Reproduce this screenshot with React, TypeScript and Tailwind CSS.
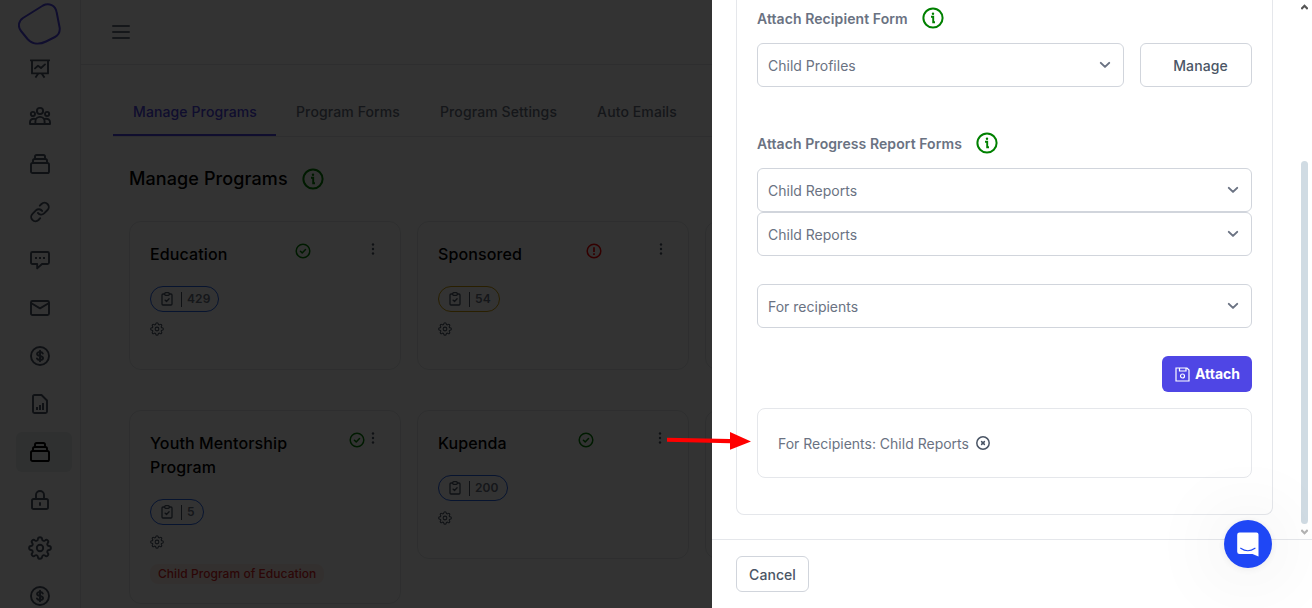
import React from "react";

type P = { className?: string };

const Line = ({ className = "", w = 1.9, box = "0 0 20 20", children }: P & { w?: number; box?: string; children: React.ReactNode }) => (
  <svg viewBox={box} fill="none" stroke="currentColor" strokeWidth={w} strokeLinecap="round" strokeLinejoin="round" className={`block shrink-0 overflow-visible ${className}`}>
    {children}
  </svg>
);

const Board = () => (
  <Line className="relative top-0.5 size-5">
    <path strokeLinecap="square" d="M1 .4H19M2 .4V13.4H18V.4M8 14L6 16.8M12 14L14 16.8" />
    <path d="M5 8.4L8 5.700L11 8L15 4.400" />
  </Line>
);

const People = () => (
  <Line className="h-5 w-[22px]" box="0 0 22 20">
    <circle cx="11" cy="5" r="3.1" />
    <circle cx="3.9" cy="8" r="2.1" />
    <circle cx="18.1" cy="8" r="2.1" />
    <path d="M6.400 18V15.500a4.600 4.600 0 0 1 9.200 0V18M6 12.900C3.200 12.400 1 13.600 1 16V18H21V16C21 13.600 18.800 12.400 16 12.900" />
  </Line>
);

const Stack = () => (
  <Line className="size-5">
    <rect x="1" y="9" width="18" height="10" rx="1.6" />
    <path d="M3 8.6V6.6Q3 5 4.6 5H15.4Q17 5 17 6.6V8.6M5 4.6V2.6Q5 1 6.6 1H13.4Q15 1 15 2.6V4.6" />
  </Line>
);

const LinkIcon = () => (
  <Line className="size-5">
    <path d="M7.9 10.9a4.1 4.1 0 0 0 6.2.5l3.4-3.4A4.2 4.2 0 0 0 11.5 2L9.8 3.7M12.1 8.9a4.1 4.1 0 0 0-6.2-.5L2.5 11.8A4.2 4.2 0 0 0 8.5 18l1.7-1.8" />
  </Line>
);

const Chat = () => (
  <Line className="size-5">
    <path d="M2.5 2H17.5Q19 2 19 3.5V12.5Q19 14 17.5 14H12L7.2 18.4V14H2.5Q1 14 1 12.5V3.5Q1 2 2.5 2Z" />
    <path strokeLinecap="butt" strokeWidth={2} d="M5 8H7M9 8H11M13 8H15" />
  </Line>
);

const Mail = () => (
  <Line className="size-5">
    <rect x="1" y="3" width="18" height="14" rx="1.5" />
    <path d="M1.4 5.3L10 10.4L18.6 5.3" />
  </Line>
);

const Dollar = () => (
  <Line className="size-5">
    <circle cx="10" cy="10" r="9" />
    <path strokeWidth={2} d="M12.8 7.5C12.4 6.5 11.4 6 10 6C8.2 6 7.1 6.7 7.1 7.9C7.1 10.8 13 9.1 13 12C13 13.3 11.8 14 10 14C8.4 14 7.4 13.4 7 12.5M10 4.8V15.2" />
  </Line>
);

const Report = () => (
  <Line className="size-5">
    <path d="M4.5 1H11.5L17 6.5V17.5Q17 19 15.5 19H4.5Q3 19 3 17.5V2.5Q3 1 4.5 1Z" />
    <path strokeLinecap="butt" strokeWidth={2} d="M7 13V16M10 11V16M13 9V16" />
  </Line>
);

const Lock = () => (
  <Line className="size-5">
    <rect x="2" y="9" width="16" height="10" rx="1.6" />
    <path d="M6 8.5V5a4 4 0 0 1 8 0V8.5" />
    <path strokeLinecap="butt" strokeWidth={2} d="M10 12.3V15.7" />
  </Line>
);

const Gear = ({ className = "", w = 1.7 }: P & { w?: number }) => (
  <Line className={className} w={w} box="0 0 24 24">
    <circle cx="12" cy="12" r="3.2" />
    <path d="M12 1.2c1.2 0 2 .8 2.1 2 .1 1.5 1.700 2.200 2.900 1.200.9-.8 2-.7 2.700 0s.8 1.800 0 2.700c-1 1.200-.3 2.800 1.200 2.900 1.200.1 2 .9 2 2s-.8 1.900-2 2c-1.500.1-2.200 1.700-1.200 2.900.8.9.7 2 0 2.700s-1.800.8-2.700 0c-1.200-1-2.800-.3-2.900 1.200-.1 1.200-.9 2-2.100 2s-2-.8-2.100-2c-.1-1.500-1.700-2.200-2.900-1.200-.9.800-2 .7-2.700 0s-.8-1.800 0-2.700c1-1.200.3-2.800-1.200-2.900-1.200-.1-2-.9-2-2s.8-1.900 2-2c1.500-.1 2.200-1.700 1.200-2.900-.8-.9-.7-2 0-2.700s1.800-.8 2.700 0c1.200 1 2.800.3 2.900-1.200.1-1.200.9-2 2.100-2Z" />
  </Line>
);

const Info = () => (
  <svg viewBox="0 0 22 22" className="block size-[22px] shrink-0" fill="none" stroke="#008000">
    <circle cx="11" cy="11" r="9.6" strokeWidth="2" />
    <circle cx="11" cy="6.700" r="1.200" fill="#008000" stroke="none" />
    <path d="M9 9.800H11.200V15.200H13" strokeWidth="1.900" />
  </svg>
);

const Check = () => (
  <Line className="size-4 text-[#008000]" w={1.5} box="0 0 16 16">
    <circle cx="8" cy="8" r="6.8" />
    <path d="M5.400 8.200L7.200 9.900L10.500 6.500" />
  </Line>
);

const Alert = () => (
  <Line className="size-4 text-[#ff0000]" w={1.5} box="0 0 16 16">
    <circle cx="8" cy="8" r="6.8" />
    <path strokeLinecap="butt" strokeWidth={1.700} d="M8 4.300V8.900M8 10.200V11.900" />
  </Line>
);

const Dots = () => (
  <svg viewBox="0 0 4 14" className="block h-3.5 w-1 shrink-0 text-gray-600" fill="currentColor">
    <circle cx="2" cy="2.500" r="1.200" />
    <circle cx="2" cy="7" r="1.200" />
    <circle cx="2" cy="11.500" r="1.200" />
  </svg>
);

const Clipboard = () => (
  <Line className="h-[14px] w-3 text-gray-600" w={1.3} box="0 0 12 14">
    <path d="M3.500 2H2Q1 2 1 3V12Q1 13 2 13H10Q11 13 11 12V3Q11 2 10 2H8.500" />
    <rect x="3.700" y=".7" width="4.600" height="2.600" rx="1" />
    <path d="M4 8.100L5.500 9.500L8.100 6.700" />
  </Line>
);

const Chevron = () => (
  <Line className="h-1.5 w-2.5 text-gray-500" w={2} box="0 0 10 6">
    <path d="M.8 .9L5 4.900L9.200 .9" />
  </Line>
);

const navItems = [Board, People, Stack, LinkIcon, Chat, Mail, Dollar, Report, Stack, Lock, () => <Gear className="size-6" w={1.900} />, Dollar];

function Sidebar() {
  return (
    <aside className="flex w-[81px] shrink-0 flex-col border-r border-gray-200">
      <div className="flex h-12 shrink-0 justify-center pt-[3px]">
        <svg viewBox="0 0 44 42" className="block h-[42px] w-11" fill="none" stroke="#4f46e5" strokeWidth="2">
          <path d="M5 15L25 2.500C31 -.8 37.500 2.500 38.600 9L41.700 25C42 29 41 32 37 34L28 38.500C21 42 14 41 9.500 36L3 28C-.5 23.500 .5 18 5 15Z" />
        </svg>
      </div>
      <nav className="flex flex-col gap-2 px-4">
        {navItems.map((Icon, i) => (
          <div key={i} className={`flex h-10 w-14 shrink-0 items-center rounded-md ${i === 8 ? "bg-[#e9f0ef] text-black" : "text-gray-600"}`}>
            <div className="flex w-12 justify-center"><Icon /></div>
          </div>
        ))}
      </nav>
    </aside>
  );
}

type Program = { name: string; count: number; pill: string; inset: string; dots: string; alert?: boolean; parent?: string };

function ProgramCard({ p }: { p: Program }) {
  return (
    <article className="rounded-xl border border-gray-200 p-5 pb-[33px]">
      <div className="flex items-start">
        <h3 className="flex-1 text-base font-medium tracking-[0.12px] text-black">{p.name}</h3>
        <div className={p.inset}>{p.alert ? <Alert /> : <Check />}</div>
        <div className={p.dots}><Dots /></div>
      </div>
      <div className="mt-5 flex">
        <div className={`flex h-[26px] items-center rounded-full border pl-2.5 pr-2 text-xs font-semibold text-gray-500 ${p.pill}`}>
          <Clipboard />
          <span className="ml-2 h-[15px] w-px bg-gray-600" />
          <span className="ml-[5px] tracking-[0.1px]">{p.count}</span>
        </div>
      </div>
      <Gear className="mt-2.5 size-3.5 text-gray-600" w={1.800} />
      {p.parent && (
        <div className="mt-[15px] -mb-[14px] flex">
          <span className="h-5 rounded-lg bg-[#fdf0ec] px-2 text-xs leading-5 font-medium tracking-[0.05px] text-[#dc2626]">{p.parent}</span>
        </div>
      )}
    </article>
  );
}

const blue = "border-[#2563eb]";
const programs: Program[] = [
  { name: "Education", count: 429, pill: blue, inset: "mt-px mr-[60px]", dots: "mr-[5px]" },
  { name: "Sponsored", count: 54, pill: "border-[#ca9a04]", inset: "mt-px mr-[57px]", dots: "mr-[5px]", alert: true },
  { name: "", count: 0, pill: blue, inset: "mr-1.5", dots: "mr-1" },
  { name: "Youth Mentorship Program", count: 5, pill: blue, inset: "mt-px mr-1.5", dots: "mr-[5px]", parent: "Child Program of Education" },
  { name: "Kupenda", count: 200, pill: blue, inset: "mt-px mr-16", dots: "mr-1.5" },
  { name: "", count: 0, pill: blue, inset: "mr-1.5", dots: "mr-1" },
];

function Page() {
  return (
    <div className="relative flex h-full w-[712px] shrink-0 overflow-hidden bg-white">
      <Sidebar />
      <main className="flex min-w-0 flex-1 flex-col">
        <header className="flex h-[65px] shrink-0 items-center border-b border-gray-200 pl-[31px]">
          <div className="flex w-[18px] flex-col gap-1">
            <span className="h-0.5 rounded bg-gray-500" />
            <span className="h-0.5 rounded bg-gray-500" />
            <span className="h-0.5 rounded bg-gray-500" />
          </div>
        </header>
        <div className="ml-8 mt-6 flex h-12 shrink-0 items-start border-b border-gray-200 text-sm font-medium tracking-[0.11px] whitespace-nowrap text-gray-500">
          <div className="flex h-[47px] w-[163px] shrink-0 items-center justify-center border-b-2 border-[#4f46e5] pl-px text-[#4f46e5]">Manage Programs</div>
          <div className="flex h-[46px] w-36 shrink-0 items-center justify-center">Program Forms</div>
          <div className="flex h-[46px] w-[157px] shrink-0 items-center justify-center">Program Settings</div>
          <div className="flex h-[46px] w-[120px] shrink-0 items-center justify-center">Auto Emails</div>
        </div>
        <div className="mt-7 flex h-7 shrink-0 items-center gap-3.5 pl-12">
          <h1 className="text-lg font-medium tracking-[0.1px] text-black">Manage Programs</h1>
          <Info />
        </div>
        <div className="ml-12 mt-7 grid w-[848px] shrink-0 grid-cols-3 items-start gap-x-4 gap-y-10">
          {programs.map((p, i) =>
            p.name ? <ProgramCard key={i} p={p} /> : <article key={i} className="h-[149px] rounded-xl border border-gray-200" />
          )}
        </div>
      </main>
      <div className="absolute inset-0 bg-black/80" />
    </div>
  );
}

function Select({ value, className = "" }: { value: string; className?: string }) {
  return (
    <div className={`flex h-11 items-center justify-between rounded-md border border-gray-300 pl-2.5 pr-[13px] text-sm text-gray-500 ${className}`}>
      <span className="pt-0.5">{value}</span>
      <Chevron />
    </div>
  );
}

function Drawer() {
  return (
    <section className="flex h-full w-[600px] shrink-0 flex-col bg-white">
      <div className="flex h-[539px] shrink-0">
        <div className="ml-6 h-[515px] w-[537px] rounded-b-lg border border-t-0 border-gray-200 px-5">
          <div className="flex h-[43px] items-start gap-3.5 pt-[7px]">
            <label className="pt-px text-sm leading-[22px] font-semibold tracking-[0.08px] text-gray-500">Attach Recipient Form</label>
            <Info />
          </div>
          <div className="flex gap-4">
            <Select value="Child Profiles" className="w-[367px]" />
            <button className="h-11 w-28 rounded-md border border-gray-300 pl-[9px] pt-0.5 text-sm font-medium tracking-[0.08px] text-gray-600">Manage</button>
          </div>
          <div className="mt-[45px] flex h-9 items-start gap-3.5">
            <label className="pt-px text-sm leading-[22px] font-semibold tracking-[0.08px] text-gray-500">Attach Progress Report Forms</label>
            <Info />
          </div>
          <Select value="Child Reports" />
          <Select value="Child Reports" />
          <Select value="For recipients" className="mt-7" />
          <div className="mt-7 flex justify-end">
            <button className="flex h-9 w-[90px] items-center justify-center gap-[5px] rounded-md bg-[#4f46e5] pl-px text-sm font-bold text-white">
              <Line className="size-[15px]" w={1.200} box="0 0 15 15">
                <path strokeLinejoin="miter" d="M1 1H12L14 3V14H1ZM4.500 1V4H11V1" />
                <circle cx="7.500" cy="9" r="2" />
              </Line>
              Attach
            </button>
          </div>
          <div className="mt-4 flex h-[70px] items-center gap-[7px] rounded-lg border border-gray-200 pl-5 text-sm text-gray-500">
            <span className="pt-0.5">For Recipients: Child Reports</span>
            <Line className="size-3.5 text-gray-600" w={1.500} box="0 0 14 14">
              <circle cx="7" cy="7" r="6.200" />
              <path d="M5.600 5.600L8.400 8.400M8.400 5.600L5.600 8.400" />
            </Line>
          </div>
        </div>
        <div className="ml-auto mr-1 flex w-[7px] flex-col items-center">
          <svg viewBox="0 0 7 6" className="mt-1 block h-1.5 w-[7px]" fill="none" stroke="#555" strokeWidth="2.200"><path d="M.3 5L3.500 1.800L6.700 5" /></svg>
          <div className="mt-[151px] h-[363px] w-[7px] rounded-full bg-[#d0dbe3]" />
          <svg viewBox="0 0 7 6" className="mt-[5px] block h-1.5 w-[7px]" fill="none" stroke="#b3b3b3" strokeWidth="2.200"><path d="M.3 1L3.500 4.200L6.700 1" /></svg>
        </div>
      </div>
      <footer className="flex-1 border-t border-gray-200 px-6 pt-4">
        <button className="h-9 w-[73px] rounded-md border border-gray-300 pt-0.5 text-sm font-medium tracking-[0.05px] text-gray-600">Cancel</button>
      </footer>
    </section>
  );
}

export default function App() {
  return (
    <div className="relative flex h-[608px] w-[1312px] overflow-hidden font-['Inter',sans-serif]">
      <Page />
      <Drawer />
      <svg viewBox="0 0 85 18" className="absolute left-[666px] top-[432px] h-[18px] w-[85px]" fill="#f00">
        <path d="M1 5.800L64 7V0L85 9.400L64 17.700V11.200L1 9.800Z" />
      </svg>
      <div className="absolute left-[1224px] top-[520px] flex size-12 items-center justify-center rounded-full bg-[#1f47f5] shadow-[0_1px_6px_rgba(0,0,0,0.06),0_2px_80px_rgba(0,0,0,0.14)]">
        <svg viewBox="0 0 22 25" className="block h-[25px] w-[22px]">
          <path fill="#fff" d="M2.500 .5H19.500Q21.500 .5 21.500 2.500V24.500L15.500 22H2.500Q.2 22 .2 19.800V2.700Q.2 .5 2.500 .5Z" />
          <path fill="none" stroke="#1f47f5" strokeWidth="1.100" strokeLinecap="round" d="M3.700 16.200Q10.800 21.300 18 16.200" />
        </svg>
      </div>
    </div>
  );
}
